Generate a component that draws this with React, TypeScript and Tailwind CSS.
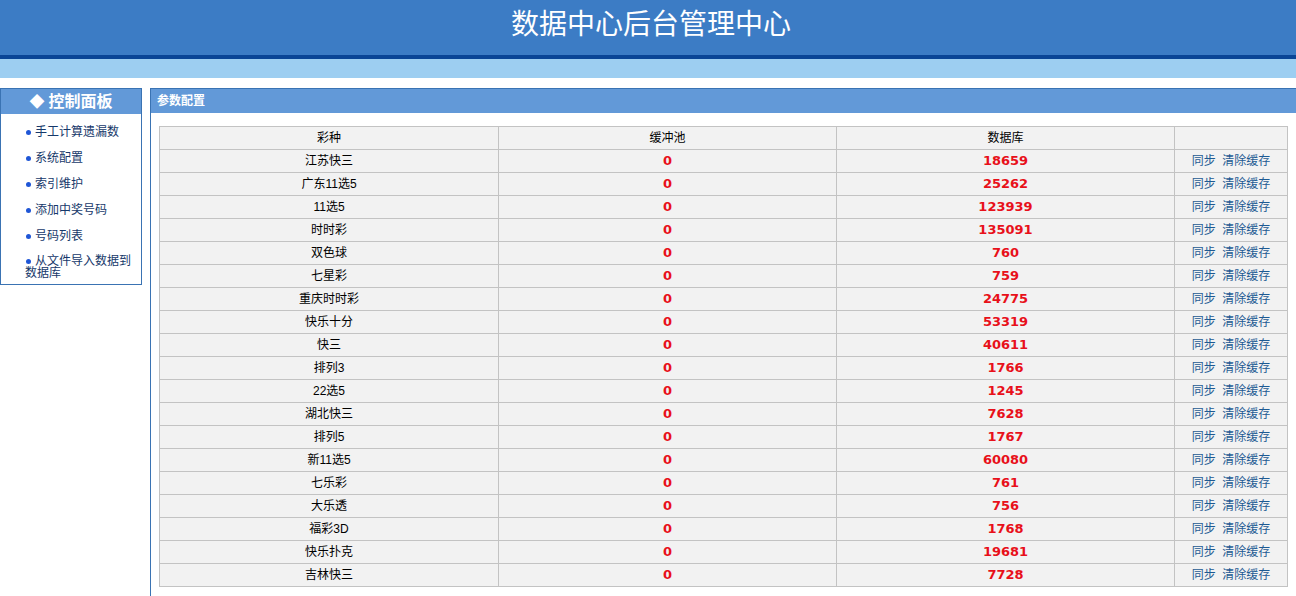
import React from "react";

const rows: [string, string][] = [
  ["江苏快三", "18659"],
  ["广东11选5", "25262"],
  ["11选5", "123939"],
  ["时时彩", "135091"],
  ["双色球", "760"],
  ["七星彩", "759"],
  ["重庆时时彩", "24775"],
  ["快乐十分", "53319"],
  ["快三", "40611"],
  ["排列3", "1766"],
  ["22选5", "1245"],
  ["湖北快三", "7628"],
  ["排列5", "1767"],
  ["新11选5", "60080"],
  ["七乐彩", "761"],
  ["大乐透", "756"],
  ["福彩3D", "1768"],
  ["快乐扑克", "19681"],
  ["吉林快三", "7728"],
];

const menu = ["手工计算遗漏数", "系统配置", "索引维护", "添加中奖号码", "号码列表"];

export default function App() {
  return (
    <div
      className="w-[1296px] h-[596px] overflow-hidden bg-white"
      style={{ fontFamily: '"Liberation Sans", "Noto Sans CJK SC", sans-serif' }}
    >
      <div className="h-[55px] bg-[#3c7cc5] flex items-center justify-center">
        <h1 className="text-[28px] text-white leading-none -mt-[6px] ml-[6px] font-normal">数据中心后台管理中心</h1>
      </div>
      <div className="h-[4px] bg-[#0a4596]" />
      <div className="h-[19px] bg-[#9dcef1]" />
      <div className="flex mt-[10px] h-[508px]">
        <div className="w-[142px] shrink-0">
          <div className="border border-[#3a73b3]">
            <div className="h-[25px] bg-[#6299d8] flex items-center justify-center text-white font-bold text-[16px] leading-none">
              <span className="mr-[4px] text-[15px]">◆</span>控制面板
            </div>
            <ul className="pt-[5px] pb-[3px] text-[12px] text-[#16386a]">
              {menu.map((m) => (
                <li key={m} className="h-[26px] flex items-center pl-[24px]">
                  <span className="inline-block w-[5px] h-[5px] rounded-full bg-[#1f56d6] mr-[4px] ml-[1px]" />
                  {m}
                </li>
              ))}
              <li className="pl-[24px] pt-[6px] pb-[2px] leading-[12px]">
                <span className="inline-block w-[5px] h-[5px] rounded-full bg-[#1f56d6] mr-[4px] ml-[1px] align-middle" />
                从文件导入数据到数据库
              </li>
            </ul>
          </div>
        </div>
        <div className="ml-[8px] flex-1 border-l border-[#3a73b3] h-full">
          <div className="h-[25px] bg-[#6299d8] border-t border-[#3a73b3] flex items-center pl-[6px] text-white font-bold text-[12px]">
            参数配置
          </div>
          <div className="px-[8px] pt-[13px]">
            <table className="w-full border-collapse text-[12px] text-black bg-[#f2f2f2] table-fixed">
              <colgroup>
                <col className="w-[339px]" />
                <col className="w-[338px]" />
                <col className="w-[338px]" />
                <col />
              </colgroup>
              <thead>
                <tr className="h-[23px]">
                  <th className="border border-[#c3c3c3] font-normal">彩种</th>
                  <th className="border border-[#c3c3c3] font-normal">缓冲池</th>
                  <th className="border border-[#c3c3c3] font-normal">数据库</th>
                  <th className="border border-[#c3c3c3] font-normal"></th>
                </tr>
              </thead>
              <tbody>
                {rows.map(([name, n]) => (
                  <tr key={name} className="h-[23px]">
                    <td className="border border-[#c3c3c3] text-center">{name}</td>
                    <td
                      className="border border-[#c3c3c3] text-center text-[#e8101a] font-bold text-[13px]"
                      style={{ fontFamily: '"DejaVu Sans", sans-serif' }}
                    >
                      0
                    </td>
                    <td
                      className="border border-[#c3c3c3] text-center text-[#e8101a] font-bold text-[13px]"
                      style={{ fontFamily: '"DejaVu Sans", sans-serif' }}
                    >
                      {n}
                    </td>
                    <td className="border border-[#c3c3c3] text-center text-[#1d5a92]">
                      同步&nbsp;&nbsp;清除缓存
                    </td>
                  </tr>
                ))}
              </tbody>
            </table>
          </div>
        </div>
      </div>
    </div>
  );
}
